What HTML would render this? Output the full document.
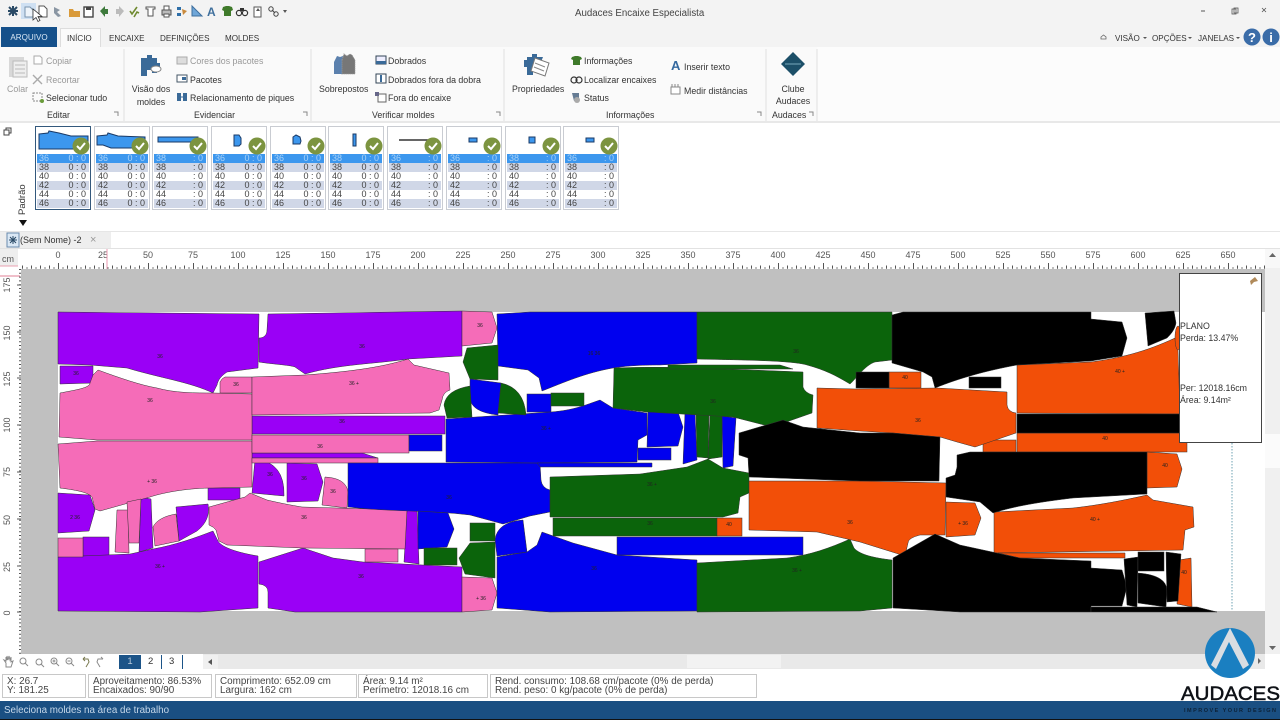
<!DOCTYPE html>
<html lang="pt"><head><meta charset="utf-8"><title>Audaces Encaixe Especialista</title>
<style>
html,body{margin:0;padding:0;width:1280px;height:720px;overflow:hidden;background:#fff}
body{position:relative;font-family:"Liberation Sans","DejaVu Sans",sans-serif;color:#333}
.t{position:absolute;white-space:nowrap;font-size:8.8px;line-height:12px}
.h{font-size:8.1px}
.g{color:#999}
.c{text-align:center}
.b{position:absolute}
svg{position:absolute;left:0;top:0}
.card{position:absolute;top:126px;width:54px;height:82px;border:1px solid #c9ccd2;background:#fff}
.card.sel{border:1.5px solid #33587c;width:54px}
.r{position:absolute;left:1px;right:1px;height:9px;font-size:9px;line-height:9px;color:#444;padding-left:2px}
.r i{position:absolute;right:3px;font-style:normal}
.r.a{background:#3c97ee;color:#a9d2f8}
.r.s{background:#d0d7e7}
.box{position:absolute;top:674px;height:24px;border:1px solid #c8c8c8;background:#fff;font-size:9.9px;line-height:8.500px;color:#444;white-space:nowrap;padding:3px 0 0 4px;box-sizing:border-box}
.box div{height:8.500px}
</style></head><body>
<div class="b" style="left:0;top:0;width:1280px;height:47px;background:#f3f3f3"></div>
<div class="b" style="left:1px;top:27px;width:56px;height:20px;background:#15508a"></div>
<div class="t h" style="left:1px;top:32px;width:56px;text-align:center;color:#d8e6f4">ARQUIVO</div>
<div class="b" style="left:60px;top:28px;width:41px;height:19px;background:#fafafa;border:1px solid #ddd;border-bottom:0;box-sizing:border-box"></div>
<div class="t h" style="left:67px;top:33px">INÍCIO</div>
<div class="t h" style="left:109px;top:33px">ENCAIXE</div>
<div class="t h" style="left:160px;top:33px">DEFINIÇÕES</div>
<div class="t h" style="left:225px;top:33px">MOLDES</div>
<div class="t" style="left:575px;top:8px;font-size:9.7px;color:#444">Audaces Encaixe Especialista</div>
<div class="t h" style="left:1115px;top:33px">VISÃO</div>
<div class="t h" style="left:1152px;top:33px">OPÇÕES</div>
<div class="t h" style="left:1198px;top:33px">JANELAS</div>
<!-- ribbon -->
<div class="b" style="left:0;top:47px;width:1280px;height:76px;background:#fafafa;border-bottom:2px solid #e8e8e8;box-sizing:border-box"></div>
<div class="b" style="left:817px;top:47px;width:463px;height:76px;background:#fcfcfc;border-bottom:2px solid #e8e8e8;box-sizing:border-box"></div>
<div class="t g" style="left:46px;top:55px">Copiar</div>
<div class="t g" style="left:46px;top:74px">Recortar</div>
<div class="t" style="left:46px;top:92px">Selecionar tudo</div>
<div class="t g" style="left:7px;top:83px">Colar</div>
<div class="t" style="left:47px;top:109px">Editar</div>
<div class="t g" style="left:190px;top:55px">Cores dos pacotes</div>
<div class="t" style="left:190px;top:74px">Pacotes</div>
<div class="t" style="left:190px;top:92px">Relacionamento de piques</div>
<div class="t c" style="left:128px;top:83px;width:46px;line-height:12.5px">Visão dos<br>moldes</div>
<div class="t" style="left:194px;top:109px">Evidenciar</div>
<div class="t" style="left:319px;top:83px">Sobrepostos</div>
<div class="t" style="left:388px;top:55px">Dobrados</div>
<div class="t" style="left:388px;top:74px">Dobrados fora da dobra</div>
<div class="t" style="left:388px;top:92px">Fora do encaixe</div>
<div class="t" style="left:372px;top:109px">Verificar moldes</div>
<div class="t" style="left:512px;top:83px">Propriedades</div>
<div class="t" style="left:584px;top:55px">Informações</div>
<div class="t" style="left:584px;top:74px">Localizar encaixes</div>
<div class="t" style="left:584px;top:92px">Status</div>
<div class="t" style="left:684px;top:61px">Inserir texto</div>
<div class="t" style="left:684px;top:85px">Medir distâncias</div>
<div class="t" style="left:606px;top:109px">Informações</div>
<div class="t c" style="left:770px;top:83px;width:46px;line-height:12px">Clube<br>Audaces</div>
<div class="t" style="left:772px;top:109px">Audaces</div>
<!-- molds -->
<div class="card sel" style="left:35px"><div class="r a" style="top:27px">36<i>0 : 0</i></div><div class="r s" style="top:36px">38<i>0 : 0</i></div><div class="r" style="top:45px">40<i>0 : 0</i></div><div class="r s" style="top:54px">42<i>0 : 0</i></div><div class="r" style="top:63px">44<i>0 : 0</i></div><div class="r s" style="top:72px">46<i>0 : 0</i></div></div>
<div class="card" style="left:94px"><div class="r a" style="top:27px">36<i>0 : 0</i></div><div class="r s" style="top:36px">38<i>0 : 0</i></div><div class="r" style="top:45px">40<i>0 : 0</i></div><div class="r s" style="top:54px">42<i>0 : 0</i></div><div class="r" style="top:63px">44<i>0 : 0</i></div><div class="r s" style="top:72px">46<i>0 : 0</i></div></div>
<div class="card" style="left:152px"><div class="r a" style="top:27px">38<i>: 0</i></div><div class="r s" style="top:36px">38<i>: 0</i></div><div class="r" style="top:45px">40<i>: 0</i></div><div class="r s" style="top:54px">42<i>: 0</i></div><div class="r" style="top:63px">44<i>: 0</i></div><div class="r s" style="top:72px">46<i>: 0</i></div></div>
<div class="card" style="left:211px"><div class="r a" style="top:27px">36<i>0 : 0</i></div><div class="r s" style="top:36px">38<i>0 : 0</i></div><div class="r" style="top:45px">40<i>0 : 0</i></div><div class="r s" style="top:54px">42<i>0 : 0</i></div><div class="r" style="top:63px">44<i>0 : 0</i></div><div class="r s" style="top:72px">46<i>0 : 0</i></div></div>
<div class="card" style="left:270px"><div class="r a" style="top:27px">36<i>0 : 0</i></div><div class="r s" style="top:36px">38<i>0 : 0</i></div><div class="r" style="top:45px">40<i>0 : 0</i></div><div class="r s" style="top:54px">42<i>0 : 0</i></div><div class="r" style="top:63px">44<i>0 : 0</i></div><div class="r s" style="top:72px">46<i>0 : 0</i></div></div>
<div class="card" style="left:328px"><div class="r a" style="top:27px">38<i>0 : 0</i></div><div class="r s" style="top:36px">38<i>0 : 0</i></div><div class="r" style="top:45px">40<i>0 : 0</i></div><div class="r s" style="top:54px">42<i>0 : 0</i></div><div class="r" style="top:63px">44<i>0 : 0</i></div><div class="r s" style="top:72px">46<i>0 : 0</i></div></div>
<div class="card" style="left:387px"><div class="r a" style="top:27px">36<i>: 0</i></div><div class="r s" style="top:36px">38<i>: 0</i></div><div class="r" style="top:45px">40<i>: 0</i></div><div class="r s" style="top:54px">42<i>: 0</i></div><div class="r" style="top:63px">44<i>: 0</i></div><div class="r s" style="top:72px">46<i>: 0</i></div></div>
<div class="card" style="left:446px"><div class="r a" style="top:27px">36<i>: 0</i></div><div class="r s" style="top:36px">38<i>: 0</i></div><div class="r" style="top:45px">40<i>: 0</i></div><div class="r s" style="top:54px">42<i>: 0</i></div><div class="r" style="top:63px">44<i>: 0</i></div><div class="r s" style="top:72px">46<i>: 0</i></div></div>
<div class="card" style="left:505px"><div class="r a" style="top:27px">38<i>: 0</i></div><div class="r s" style="top:36px">38<i>: 0</i></div><div class="r" style="top:45px">40<i>: 0</i></div><div class="r s" style="top:54px">42<i>: 0</i></div><div class="r" style="top:63px">44<i>: 0</i></div><div class="r s" style="top:72px">46<i>: 0</i></div></div>
<div class="card" style="left:563px"><div class="r a" style="top:27px">36<i>: 0</i></div><div class="r s" style="top:36px">38<i>: 0</i></div><div class="r" style="top:45px">40<i>: 0</i></div><div class="r s" style="top:54px">42<i>: 0</i></div><div class="r" style="top:63px">44<i>: 0</i></div><div class="r s" style="top:72px">46<i>: 0</i></div></div>
<div class="t" style="left:8px;top:194px;font-size:9.500px;transform:rotate(-90deg);width:30px;text-align:center">Padrão</div>
<!-- doc tab -->
<div class="b" style="left:0;top:231px;width:1280px;height:18px;background:#fff;border-top:1px solid #e6e6e6;border-bottom:1px solid #e2e2e2;box-sizing:border-box"></div>
<div class="b" style="left:0;top:232px;width:111px;height:16px;background:#eeeeee"></div>
<div class="t" style="left:20px;top:234px;font-size:9px">(Sem Nome) -2</div>
<div class="t" style="left:90px;top:234px;font-size:11px;color:#999">×</div>
<!-- canvas bg -->
<div class="b" style="left:0;top:249px;width:18px;height:17px;background:#eee"></div>
<div class="b" style="left:21px;top:269px;width:1244px;height:385px;background:#c0c0c0"></div>
<div class="b" style="left:1265px;top:249px;width:15px;height:405px;background:#f0f0f0"></div>
<div class="b" style="left:1265px;top:249px;width:15px;height:19px;background:#f8f8f8"></div>
<div class="b" style="left:1265px;top:434px;width:15px;height:34px;background:#fbfbfb"></div>
<div class="b" style="left:0;top:654px;width:1265px;height:15px;background:#e9e9e9"></div>
<div class="b" style="left:0;top:654px;width:203px;height:15px;background:#fff"></div>
<div class="b" style="left:687px;top:655px;width:94px;height:13px;background:#f2f2f2"></div>
<div class="b" style="left:119px;top:655px;width:22px;height:14px;background:#1c5488"></div>
<div class="t" style="left:119px;top:656px;width:22px;text-align:center;color:#bcd;font-size:9.500px">1</div>
<div class="t" style="left:148px;top:656px;font-size:9.500px">2</div>
<div class="t" style="left:169px;top:656px;font-size:9.500px">3</div>
<div class="b" style="left:161px;top:655px;width:1px;height:14px;background:#1c5488"></div>
<div class="b" style="left:182px;top:655px;width:1px;height:14px;background:#1c5488"></div>
<!-- status -->
<div class="box" style="left:2px;width:84px"><div>X: 26.7</div><div>Y: 181.25</div></div>
<div class="box" style="left:88px;width:124px"><div>Aproveitamento: 86.53%</div><div>Encaixados: 90/90</div></div>
<div class="box" style="left:215px;width:142px"><div>Comprimento: 652.09 cm</div><div>Largura: 162 cm</div></div>
<div class="box" style="left:358px;width:130px"><div>Área: 9.14 m²</div><div>Perímetro: 12018.16 cm</div></div>
<div class="box" style="left:490px;width:267px"><div>Rend. consumo: 108.68 cm/pacote (0% de perda)</div><div>Rend. peso: 0 kg/pacote (0% de perda)</div></div>
<div class="b" style="left:0;top:701px;width:1280px;height:18px;background:#1a4f82"></div>
<div class="b" style="left:0;top:719px;width:1280px;height:1px;background:#111"></div>
<div class="t" style="left:4px;top:705px;color:#c6d8ea;font-size:9.8px">Seleciona moldes na área de trabalho</div>

<svg width="1280" height="720" viewBox="0 0 1280 720" font-family="Liberation Sans, sans-serif">
<!-- top toolbar icons -->
<rect x="21" y="3" width="15" height="16" fill="#cfe0f2"/>
<path d="M8 11h10M13 6v10M9 7l8 8M17 7l-8 8" stroke="#2a4a66" stroke-width="2"/>
<path d="M25 7h5l3 3v7h-8z" fill="#eef4fa" stroke="#7a94ad"/>
<path d="M39 6h5l3 3v8h-8z" fill="#fff" stroke="#555"/>
<path d="M54 7l6 3-3 2 4 4-3 1-4-4z" fill="#8a96a3"/>
<path d="M69 9h4l1 2h6v6H69z" fill="#d99a3a"/>
<rect x="84" y="7" width="9" height="10" fill="#fff" stroke="#444" stroke-width="1.4"/><rect x="86" y="7" width="5" height="3" fill="#444"/>
<path d="M100 11l5-5v3h3v5h-3v3z" fill="#3e7a3c"/>
<path d="M124 11l-5-5v3h-3v5h3v3z" fill="#bbb"/>
<path d="M130 11l2 3 5-7M134 17l3-5 2 1" stroke="#6f8a30" stroke-width="1.6" fill="none"/>
<path d="M146 7h9v2h-2v7h-5V9h-2z" fill="#fff" stroke="#555"/>
<path d="M162 10h9v5h-9z" fill="#bbb" stroke="#555"/><rect x="164" y="6" width="5" height="4" fill="#fff" stroke="#555"/><rect x="164" y="14" width="5" height="3" fill="#fff" stroke="#555"/>
<path d="M177 7h4v3h-4zM177 13h4v3h-4z" fill="#2f6fa8"/><path d="M182 9l5 2-4 4z" fill="#c98a3c"/>
<path d="M192 6v10h10z" fill="#6fa6d8" stroke="#3e6f9e"/>
<text x="207" y="16" font-size="12" font-weight="bold" fill="#3f6f9c">A</text>
<path d="M223 7l3-1h3l3 1 1 3-2 1v5h-7v-5l-2-1z" fill="#3f7a2a"/>
<circle cx="239" cy="13" r="2.6" fill="none" stroke="#333" stroke-width="1.2"/><circle cx="245" cy="13" r="2.6" fill="none" stroke="#333" stroke-width="1.2"/><path d="M240 8h4v3h-4z" fill="#333"/>
<path d="M254 7h7v10h-7z" fill="#fff" stroke="#555"/><path d="M256 11l2-3 2 3z" fill="#555"/>
<circle cx="271" cy="9" r="2.2" fill="none" stroke="#444"/><circle cx="276" cy="14" r="2.2" fill="none" stroke="#444"/><path d="M272 10l3 3" stroke="#444"/>
<path d="M283 10h4l-2 3z" fill="#555"/>
<path d="M33 9v11l3-2.5 2 4 2-1-2-4h4z" fill="#fff" stroke="#333" stroke-width=".8"/>
<!-- window controls -->
<path d="M1201 11h4" stroke="#555"/><rect x="1232" y="9" width="4" height="5" fill="none" stroke="#555" stroke-width=".8"/><rect x="1234" y="8" width="4" height="5" fill="none" stroke="#555" stroke-width=".8"/>
<path d="M1262 8l4 4M1266 8l-4 4" stroke="#555" stroke-width=".8"/>
<path d="M1101 37l2.5-2 2.5 2v2h-5z" fill="none" stroke="#666" stroke-width=".8"/>
<path d="M1143 37h4l-2 2zM1188 37h4l-2 2zM1236 37h4l-2 2z" fill="#555"/>
<circle cx="1252" cy="37" r="8.500" fill="#3a6ca8"/><text x="1252" y="42" font-size="13" font-weight="bold" fill="#fff" text-anchor="middle">?</text>
<circle cx="1271" cy="37" r="8.500" fill="#3a6ca8"/><text x="1271" y="42" font-size="13" font-weight="bold" fill="#fff" text-anchor="middle">i</text>
<!-- ribbon separators -->
<path d="M124 49v72M311 49v72M504 49v72M766 49v72M817 49v72" stroke="#e0e0e0"/>
<path d="M114 112h4v4M303 112h4v4M496 112h4v4M757 112h4v4M809 112h4v4" stroke="#888" fill="none"/>
<!-- ribbon icons -->
<path d="M9 57h15v20H9z" fill="#d8d8d8"/><rect x="13" y="61" width="14" height="16" fill="#eee" stroke="#bbb"/><path d="M15 65h10M15 69h10M15 73h10" stroke="#bbb"/>
<path d="M34 56h6l2 2v6h-8z" fill="#fff" stroke="#aaa"/>
<path d="M33 75l9 9M42 75l-9 9" stroke="#aaa" stroke-width="1.4"/>
<rect x="33" y="93" width="9" height="8" fill="none" stroke="#888" stroke-dasharray="2 1"/><circle cx="42" cy="101" r="2" fill="#6a9c3a"/>
<path d="M141 58h6v-3h5v3h5v5h3v5h-3v5h-5v-3h-5v6h-6z" fill="#3a6a98"/><ellipse cx="156" cy="69" rx="5" ry="3" fill="#fff" stroke="#888"/>
<rect x="177" y="57" width="10" height="7" fill="#ddd" stroke="#aaa"/>
<rect x="177" y="75" width="10" height="7" fill="#fff" stroke="#456"/><rect x="182" y="77" width="4" height="3" fill="#3a6a98"/>
<rect x="177" y="93" width="4" height="8" fill="#3a6a98"/><rect x="183" y="93" width="4" height="8" fill="#3a6a98"/><path d="M179 97h6" stroke="#3a6a98"/>
<path d="M334 62l3-6 3 1 3-1 3 6v12h-12z" fill="#5b80ad"/><path d="M342 60l2-6 3 2 3-2 2 1 3 5v14h-13z" fill="#777" stroke="#999" stroke-dasharray="1 1"/>
<rect x="376" y="56" width="10" height="8" fill="#eef" stroke="#345" /><path d="M376 61h10v3h-10z" fill="#3a6a98"/>
<rect x="376" y="74" width="10" height="9" fill="#fff" stroke="#345"/><rect x="380" y="75" width="2" height="7" fill="#3a6a98"/>
<rect x="378" y="94" width="8" height="8" fill="#fff" stroke="#666"/><rect x="375" y="92" width="4" height="4" fill="#668"/>
<path d="M527 57h5v-3h5v3h6l-2 5-3 1v4h-5v8h-6v-8h-3v-7h3z" fill="#3a6a98"/><path d="M535 58l14 5-4 13-14-5z" fill="#fff" stroke="#777"/><path d="M535 63l10 4M534 67l10 4" stroke="#888"/>
<path d="M572 57l3-1h3l3 1 1 2-2 1v5h-7v-5l-2-1z" fill="#3f7a2a"/>
<circle cx="574" cy="80" r="3" fill="none" stroke="#333" stroke-width="1.2"/><circle cx="579" cy="80" r="3" fill="none" stroke="#333" stroke-width="1.2"/>
<path d="M572 93h7v8h-5z" fill="#667c94"/><circle cx="577" cy="100" r="3" fill="#aaa"/>
<text x="671" y="70" font-size="13" font-weight="bold" fill="#35699f">A</text>
<rect x="671" y="87" width="9" height="7" fill="#fff" stroke="#888"/><path d="M672 84v3M675 84v3M678 84v3" stroke="#888"/>
<path d="M793 52l12 12-12 12-12-12z" fill="#1c4f68"/><path d="M785 64h16" stroke="#7ab" stroke-width="1"/>
<!-- thumbnails -->
<g stroke="#1a3a66" fill="#3c97ee">
<path d="M39 134l9-1 1-2 10 2 12 3h17v13H39z"/>
<path d="M97 136l10-1 1-2 10 3 27 1v11H111l-8-3h-6z"/>
<rect x="158" y="137" width="40" height="5"/>
<path d="M234 135h5l2 3v6l-2 2h-5z"/>
<path d="M293 137l3-2 4 2 1 4-1 3h-7z"/>
<rect x="353" y="134" width="3" height="12"/>
<rect x="469" y="138" width="8" height="4"/>
<rect x="529" y="137" width="6" height="6"/>
<rect x="586" y="138" width="8" height="4"/>
</g>
<path d="M399 140h34" stroke="#333" stroke-width="1.6"/>
<g fill="#7c9440"><circle cx="81" cy="146" r="8.5"/><circle cx="140" cy="146" r="8.5"/><circle cx="198" cy="146" r="8.5"/><circle cx="257" cy="146" r="8.5"/><circle cx="316" cy="146" r="8.5"/><circle cx="374" cy="146" r="8.5"/><circle cx="433" cy="146" r="8.5"/><circle cx="492" cy="146" r="8.5"/><circle cx="551" cy="146" r="8.5"/><circle cx="609" cy="146" r="8.5"/></g>
<g fill="none" stroke="#fff" stroke-width="2"><path d="M77 146l3 3 5-6M136 146l3 3 5-6M194 146l3 3 5-6M253 146l3 3 5-6M312 146l3 3 5-6M370 146l3 3 5-6M429 146l3 3 5-6M488 146l3 3 5-6M547 146l3 3 5-6M605 146l3 3 5-6"/></g>
<rect x="6" y="128" width="5" height="5" fill="#fff" stroke="#444"/><rect x="4" y="130" width="5" height="5" fill="#fff" stroke="#444"/>
<path d="M19 220h8l-4 6z" fill="#111"/>
<rect x="7" y="233" width="12" height="14" fill="#dbe8f5" stroke="#6a8bad"/><path d="M9 240h8M13 236v8M10 237l6 6M16 237l-6 6" stroke="#2a4a66"/>
<!-- ruler -->
<g font-size="9" fill="#555" text-anchor="middle">
<text x="58" y="258">0</text><text x="103" y="258">25</text><text x="148" y="258">50</text><text x="193" y="258">75</text><text x="238" y="258">100</text><text x="283" y="258">125</text><text x="328" y="258">150</text><text x="373" y="258">175</text><text x="418" y="258">200</text><text x="463" y="258">225</text><text x="508" y="258">250</text><text x="553" y="258">275</text><text x="598" y="258">300</text><text x="643" y="258">325</text><text x="688" y="258">350</text><text x="733" y="258">375</text><text x="778" y="258">400</text><text x="823" y="258">425</text><text x="868" y="258">450</text><text x="913" y="258">475</text><text x="958" y="258">500</text><text x="1003" y="258">525</text><text x="1048" y="258">550</text><text x="1093" y="258">575</text><text x="1138" y="258">600</text><text x="1183" y="258">625</text><text x="1228" y="258">650</text>
<text x="8" y="262" font-size="9">cm</text>
</g>
<g font-size="9" fill="#555" text-anchor="middle">
<text transform="translate(10,285) rotate(-90)">175</text><text transform="translate(10,333) rotate(-90)">150</text><text transform="translate(10,379) rotate(-90)">125</text><text transform="translate(10,425) rotate(-90)">100</text><text transform="translate(10,472) rotate(-90)">75</text><text transform="translate(10,520) rotate(-90)">50</text><text transform="translate(10,567) rotate(-90)">25</text><text transform="translate(10,613) rotate(-90)">0</text>
</g>
<path d="M0 266h18" stroke="#e8a0b0"/><path d="M0 276h20" stroke="#e07f96"/><path d="M107 249v20" stroke="#eb9ab0"/>
<g stroke="#555" fill="none">
<line x1="22" y1="268" x2="1265" y2="268" stroke-width="1.5" stroke-dasharray="1 3.500"/>
<line x1="22" y1="267" x2="1265" y2="267" stroke-width="3" stroke-dasharray="1 8"/>
<line x1="58" y1="266" x2="1265" y2="266" stroke-width="6" stroke-dasharray="1 44"/>
<line x1="20" y1="269" x2="20" y2="654" stroke-width="2" stroke-dasharray="1 2.800"/>
<path d="M17 285h4M17 332h4M17 378h4M17 425h4M17 472h4M17 519h4M17 566h4M17 612h4"/>
</g>
<!-- mat -->
<rect x="58" y="312" width="1207" height="299" fill="#fff"/>
<path d="M1232 443V611" stroke="#4a8aa0" stroke-width=".8" stroke-dasharray="1.5 1.5"/>
<g stroke="#333" stroke-width=".5">
<g fill="#9a00f6">
<path d="M58 312L259 314 258 368 227 372C221 376 218 380 217 385L213 393C190 382 160 378 127 368L90 365 58 364Z"/>
<path d="M268 314L462 311 462 356 408 359C375 364 340 364 305 374L295 367C290 365 270 364 259 362L259 338C264 338 267 335 267 330Z"/>
<path d="M60 366L93 366 93 383 60 384Z"/>
<rect x="252" y="416" width="193" height="18"/>
<path d="M252 453L362 453 378 458 252 458Z"/>
<path d="M255 459Q285 462 284 496L252 493Z"/>
<path d="M287 463L317 464 323 482 318 501 287 502Z"/>
<rect x="208" y="488" width="32" height="12"/>
<path d="M58 493L90 495 95 510 89 531 58 533Z"/>
<rect x="83" y="537" width="26" height="19"/>
<path d="M141 497L151 499 153 548 139 552Z"/>
<path d="M176 507L208 504Q211 520 197 531L179 541Z"/>
<path d="M58 557L130 554 153 549C175 545 195 538 213 531L218 541C222 548 240 553 258 556L258 608 200 612 58 611Z"/>
<path d="M259 562L303 548 333 558 363 562 462 567 462 612 295 612 268 608 268 592Q268 585 259 584Z"/>
<path d="M407 510L417 511 419 564 404 562Z"/>
</g>
<g fill="#f56cb8">
<path d="M60 393C75 390 90 388 90 383L93 375 98 370C120 378 140 385 157 388C175 393 195 393 213 393L252 394 252 440 97 440 59 437Z"/>
<path d="M220 382Q222 378 225 377L252 377 252 393 220 393Z"/>
<path d="M252 377L305 375C345 372 380 368 408 359L414 365 449 373 450 390Q443 392 442 400L439 410 430 413 252 415Z"/>
<path d="M58 444L97 441 252 441 252 487 213 488C190 488 165 492 150 497L100 511 95 509 92 497C88 492 75 490 60 488Z"/>
<rect x="252" y="435" width="157" height="18"/>
<rect x="252" y="458" width="126" height="5"/>
<path d="M325 477Q346 478 348 492L347 508 322 505Z"/>
<path d="M209 507L245 497 250 493 267 500C280 503 290 505 302 507L407 510 405 549 303 548 227 545 219 541 216 530Q214 527 209 525Z"/>
<rect x="58" y="538" width="25" height="19"/>
<path d="M117 510L128 510 129 553 115 552Z"/>
<path d="M127 502L141 499 139 543 129 543Z"/>
<path d="M153 527Q158 517 176 514L179 541 155 546Z"/>
<rect x="365" y="549" width="33" height="13"/>
<path d="M462 311L492 312 497 328 492 343 462 346Z"/>
<path d="M462 577L492 578 497 593 492 610 462 612Z"/>
</g>
<g fill="#0000ef">
<rect x="409" y="435" width="33" height="16"/>
<path d="M348 463L540 463 541 480Q542 488 550 490L550 512 530 516 503 524 470 515C430 510 390 512 348 507Z"/>
<path d="M418 511L448 513 454 529 447 547 418 549Z"/>
<path d="M495 540Q497 522 523 520L527 552 497 556Z"/>
<path d="M497 314L530 312 697 312 697 363 660 365C640 365 625 366 613 368C585 373 565 382 542 391L539 378 528 370 498 366Z"/>
<path d="M470 379L501 383 498 415Q470 412 470 397Z"/>
<rect x="527" y="394" width="24" height="18"/>
<path d="M446 419L551 412C575 410 585 405 600 400L613 408 647 413 647 435 638 440 637 462 540 463 446 462Z"/>
<path d="M537 463L652 463 652 467 540 467Z"/>
<path d="M648 410L678 412 683 427 678 446 647 447Z"/>
<rect x="638" y="448" width="33" height="12"/>
<path d="M685 412L695 413 697 460 683 464Z"/>
<path d="M722 416L736 418 733 466 723 468Z"/>
<rect x="617" y="537" width="186" height="18"/>
<path d="M497 557L527 552 537 545 542 532 573 543 617 555 697 560 697 611 550 612 497 608Z"/>
</g>
<g fill="#0b640b">
<path d="M463 362L467 348 498 345 498 380 470 379Z"/>
<path d="M459 558L470 543 495 542 495 578 465 574Z"/>
<rect x="424" y="548" width="33" height="17"/>
<rect x="470" y="523" width="25" height="18"/>
<path d="M444 405Q446 390 470 386L472 417 447 418Z"/>
<path d="M501 383Q524 388 526 415L498 413Z"/>
<rect x="551" y="393" width="33" height="13"/>
<path d="M696 413L709 414 708 458 697 457Z"/>
<path d="M710 414L722 415 722 457 708 459Z"/>
<path d="M614 368C640 367 670 367 700 368L803 372 803 387Q805 393 813 395L812 413 772 427 733 417 647 412 613 408Z"/>
<path d="M668 365L780 365 793 369 668 369Z"/>
<path d="M697 312L892 312 892 360 875 362C865 365 855 380 850 384C835 375 825 370 807 365C790 360 730 360 697 359Z"/>
<path d="M550 477L640 474 687 467 708 459 723 468 749 473 749 493 740 497 738 513 723 517 550 517Z"/>
<rect x="553" y="518" width="164" height="18"/>
<path d="M697 563L787 558C810 555 830 548 850 539L854 548C860 555 875 558 892 560L892 608 860 611 697 612Z"/>
</g>
<g fill="#f24f08">
<rect x="717" y="518" width="25" height="18"/>
<path d="M1017 365L1091 362C1120 358 1145 352 1175 338L1178 350 1180 414 1017 413Z"/>
<rect x="1017" y="433" width="170" height="19"/>
<rect x="983" y="440" width="33" height="12"/>
<rect x="889" y="372" width="32" height="16"/>
<path d="M817 388L856 389 937 388 1007 392 1007 405Q1008 412 1016 413L1016 433 975 447 957 442 940 437 893 433 860 431 817 428Z"/>
<path d="M749 481L860 481 946 483 945 535 920 535Q908 538 908 543L905 556 860 542 817 532 749 530Z"/>
<path d="M946 502L975 503 981 518 975 535 946 537Z"/>
<path d="M1147 452L1177 454 1182 469 1177 487 1147 488Z"/>
<path d="M994 512L1073 508C1100 505 1125 500 1147 495L1153 500 1193 507 1194 527 1185 530 1183 550 994 553Z"/>
<path d="M998 553L1125 553 1125 558 1020 558Z"/>
<path d="M1179 560L1191 558 1192 607 1177 604Z"/>
<ellipse cx="1178" cy="338" rx="3" ry="12"/>
</g>
<g fill="#000">
<path d="M892 315L903 312 1091 312 1091 319 1122 322 1127 338 1122 356 1091 361 1017 365C985 371 960 378 935 388L932 377 923 372 892 363Z"/>
<path d="M1145 313L1174 311 1176 323C1175 330 1170 335 1167 338L1148 346Z"/>
<rect x="1017" y="414" width="163" height="19"/>
<rect x="856" y="372" width="33" height="16"/>
<rect x="969" y="377" width="32" height="11"/>
<path d="M739 433L783 420 803 427 860 433 893 433 940 437 939 481 860 481 749 477 748 458 739 455Z"/>
<path d="M957 455L970 452 1147 452 1147 494 1073 498C1040 502 1015 506 993 513L980 502 946 497 946 478 955 475 957 467Z"/>
<path d="M893 558L935 534 960 545 1020 558 1091 561 1091 568 1122 570 1127 587 1122 606 1091 606 1091 612 960 612 893 608Z"/>
<path d="M1091 607L1197 607 1217 612 1091 612Z"/>
<path d="M1124 559L1138 557 1137 607 1127 605Z"/>
<rect x="1138" y="552" width="26" height="19"/>
<path d="M1138 573Q1166 575 1167 590L1166 607 1138 603Z"/>
<path d="M1166 552L1181 554 1178 601 1167 602Z"/>
</g>
</g>
<!-- piece labels -->
<g font-size="5" fill="#222" text-anchor="middle">
<text x="160" y="358">36</text><text x="362" y="348">36</text><text x="76" y="375">36</text><text x="236" y="386">36</text><text x="354" y="385">36 +</text><text x="150" y="402">36</text><text x="342" y="423">36</text><text x="320" y="448">36</text><text x="152" y="483">+ 36</text><text x="270" y="476">36</text><text x="304" y="480">36</text><text x="333" y="493">36</text><text x="75" y="519">2 36</text><text x="304" y="519">36</text><text x="160" y="568">36 +</text><text x="361" y="578">36</text><text x="480" y="327">36</text><text x="481" y="600">+ 36</text><text x="918" y="422">36</text><text x="1120" y="373">40 +</text><text x="1105" y="440">40</text><text x="1165" y="467">40</text><text x="850" y="524">36</text><text x="963" y="525">+ 36</text><text x="1095" y="521">40 +</text><text x="1184" y="574">40</text><text x="905" y="379">40</text><text x="729" y="526">40</text><text x="652" y="486">36 +</text><text x="713" y="403">36</text><text x="796" y="353">36</text><text x="797" y="572">36 +</text><text x="650" y="525">36</text><text x="594" y="355">16 36</text><text x="594" y="570">36</text><text x="546" y="430">36 +</text><text x="449" y="499">36</text></g>
<!-- popup -->
<rect x="1179.5" y="273.5" width="82" height="169" fill="#fff" stroke="#444"/>
<path d="M1250 281l5-4 3 4-4 1-3 3z" fill="#b08a5a"/>
<g font-size="8.800" fill="#333"><text x="1180" y="329">PLANO</text><text x="1180" y="341">Perda: 13.47%</text><text x="1180" y="391">Per: 12018.16cm</text><text x="1180" y="403">Área: 9.14m²</text></g>
<!-- bottom tools -->
<g fill="none" stroke="#8a8a8a" stroke-width="1">
<path d="M6 667v-4l-2-3 2 1v-4l1 3v-4l1 4 1-4 1 4 1-3v5l2-1-2 6z"/>
<circle cx="23" cy="661" r="3"/><path d="M25 663l3 3"/><circle cx="39" cy="662" r="3"/><path d="M41 664l3 3"/><circle cx="54" cy="661" r="3"/><path d="M56 663l3 3M52.5 661h3M54 659.5v3"/><circle cx="69" cy="661" r="3"/><path d="M71 663l3 3M67.5 661h3"/>
<path d="M83 659h5l1 3-3 5M83 659l2-2M83 659l2 2" stroke="#7a7a50"/><path d="M103 659h-5l-1 3 3 5M103 659l-2-2"/>
<rect x="203" y="655" width="15" height="14" fill="#f0f0f0" stroke="none"/>
</g>
<path d="M212 659v6l-4-3z" fill="#555"/>
<path d="M1269 253h7l-3.500-4z" fill="#666" transform="translate(0,4)"/>
<path d="M1269 646h7l-3.500 4z" fill="#666"/>
<path d="M1258 658v6l3-3z" fill="#666"/>
<!-- logo -->
<circle cx="1230" cy="653" r="25" fill="#1a7fc1"/>
<path d="M1230 628l19 37-6 4-14-27-13 27-5-4z" fill="#d9dde2"/>
<text x="1181" y="700" font-size="19.500" fill="#0e1116" stroke="#0e1116" stroke-width=".5" textLength="99" lengthAdjust="spacingAndGlyphs">AUDACES</text>
<text x="1184" y="712" font-size="5.500" font-weight="bold" fill="#0d2238" textLength="92">IMPROVE YOUR DESIGN</text>
</svg>
</body></html>
